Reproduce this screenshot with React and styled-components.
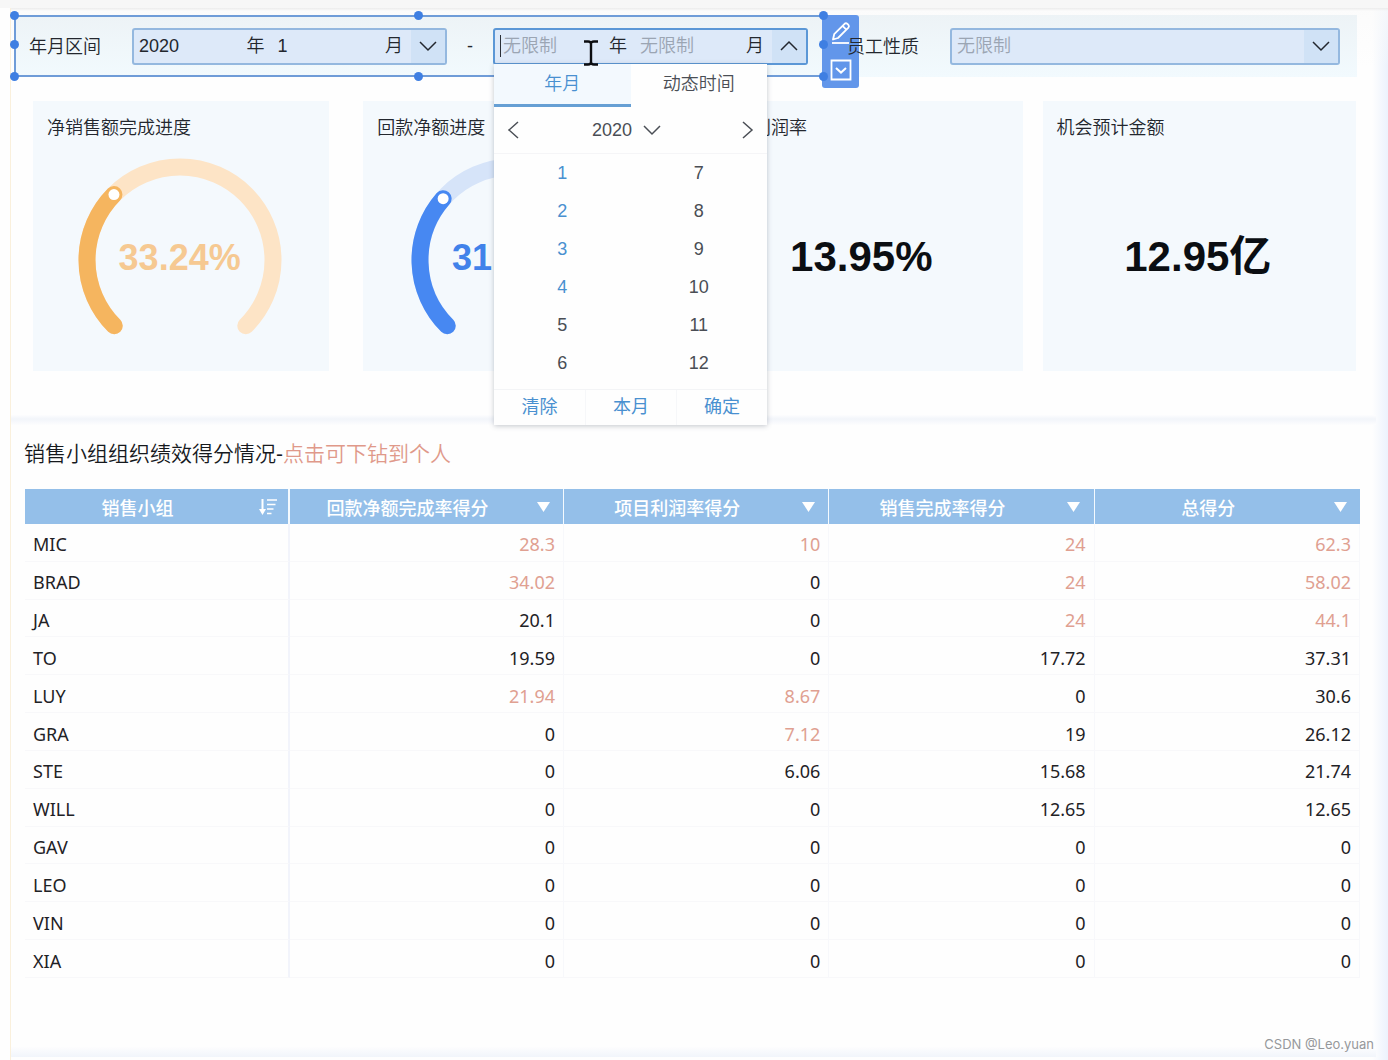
import React from "react";
import styled, { createGlobalStyle, css } from "styled-components";

const cjk = `"Noto Sans CJK SC", sans-serif`;
const uiFont = `"Liberation Sans", ${cjk}`;
const dataFont = `"Noto Sans", ${cjk}`;

const Global = createGlobalStyle`
  *, *::before, *::after { box-sizing: border-box; }
  body { margin: 0; background: #fefefe; color: #23272e; font: 350 18px/26px ${uiFont}; }
  button, input, select { font: inherit; color: inherit; margin: 0; padding: 0; border: 0; border-radius: 0; background: none; }
  button { cursor: pointer; }
  h1, h2, p { margin: 0; font-weight: inherit; font-size: inherit; }
`;

const Page = styled.div`
  position: relative;
  min-height: 100vh;
  display: flex;
  flex-direction: column;
  overflow: hidden;
`;

const TopStrip = styled.header`
  flex: none;
  height: 8px;
  background: #f7f7f7;
`;

const Board = styled.main`
  flex: 1;
  display: flex;
  flex-direction: column;
  margin-left: 10px;
  padding: 7px 12px 0 0;
  border-left: 1px solid #faf0dc;
  background:
    linear-gradient(to bottom, #ececec, rgba(250, 250, 250, 0.6) 3px, rgba(254, 254, 254, 0) 60px),
    linear-gradient(to left, #ecf2fc, rgba(254, 254, 254, 0) 16px);
`;

const FilterBar = styled.section`
  display: grid;
  grid-template-columns: 810fr 533fr;
  margin: 0 19px 0 3px;
  min-height: 62px;
  background: linear-gradient(to bottom, #edf3f6, #f2fafe);
`;

const SelectedWidget = styled.div`
  position: relative;
  display: flex;
  align-items: center;
  padding: 0 14px 0 13px;
  border: 2px solid #6f9cd8;
`;

const Widget = styled.div`
  display: flex;
  align-items: center;
  padding: 0 17px 0 23px;
`;

const FilterLabel = styled.label`
  position: relative;
  z-index: 2;
  flex: none;
  margin-right: 31px;
  padding-top: 2px;
`;

const Dash = styled.span`
  flex: none;
  width: 46px;
  text-align: center;
`;

const handleSpots = {
  nw: "left: -6px; top: -6px;",
  n: "left: calc(50% - 5px); top: -6px;",
  ne: "right: -6px; top: -6px;",
  w: "left: -6px; top: calc(50% - 6px);",
  e: "right: -6px; top: calc(50% - 6px);",
  sw: "left: -6px; bottom: -6px;",
  s: "left: calc(50% - 5px); bottom: -6px;",
  se: "right: -6px; bottom: -6px;",
};

const Handle = styled.i`
  position: absolute;
  z-index: 2;
  width: 9px;
  height: 9px;
  border-radius: 50%;
  background: #3f7fe2;
  ${(p) => handleSpots[p.$at]}
`;

const WidgetTools = styled.div`
  position: absolute;
  z-index: 1;
  top: -2px;
  left: 100%;
  width: 37px;
  height: 73px;
  display: grid;
  grid-template-rows: 1fr 1fr;
  border-radius: 0 3px 3px 3px;
  background: #6296ea;
`;

const ToolButton = styled.button`
  display: grid;
  place-items: center;
  color: #fff;
`;

const fieldBox = css`
  height: 37px;
  border: 2px solid ${(p) => (p.$open ? "#5b97d6" : "#94b8df")};
  border-radius: 3px;
  background: #dde9f9;
`;

const DateField = styled.div`
  ${fieldBox}
  position: relative;
  flex: 1;
  min-width: 0;
  display: flex;
  align-items: center;
`;

const DateInput = styled.input`
  flex: 1;
  min-width: 0;
  width: 0;
  height: 26px;
  padding-left: ${(p) => (p.$afterCaret ? 2 : 5)}px;
  outline: none;
  &::placeholder { color: #9ba5b3; opacity: 1; }
`;

const Caret = styled.i`
  flex: none;
  width: 1px;
  height: 22px;
  margin-left: 5px;
  background: #2b3038;
`;

const Unit = styled.span`
  flex: none;
  margin-right: 8px;
`;

const FieldToggle = styled.button`
  flex: none;
  width: 34px;
  height: 100%;
  display: grid;
  place-items: center;
  background: #d0e2f6;
`;

const SelectField = styled.div`
  ${fieldBox}
  flex: 1;
  min-width: 0;
  position: relative;
`;

const NativeSelect = styled.select`
  width: 100%;
  height: 100%;
  padding: 0 40px 0 5px;
  appearance: none;
  color: #9ba5b3;
  outline: none;
`;

const SelectArrow = styled.span`
  position: absolute;
  inset: 0 0 0 auto;
  width: 34px;
  display: grid;
  place-items: center;
  background: #d0e2f6;
  pointer-events: none;
`;

const TextCursor = styled.svg`
  position: absolute;
  z-index: 6;
  left: 87px;
  top: 9px;
`;

const Popup = styled.div`
  position: absolute;
  z-index: 5;
  top: 34px;
  left: -1px;
  width: 273px;
  background: #fefefe;
  color: #4a4e55;
  box-shadow: 0 1px 5px rgba(60, 70, 90, 0.3);
`;

const Tabs = styled.div`
  display: grid;
  grid-template-columns: 1fr 1fr;
`;

const Tab = styled.button`
  height: 43px;
  border-bottom: 3px solid ${(p) => (p.$active ? "#669fd4" : "transparent")};
  background: ${(p) => (p.$active ? "#f3f9fe" : "transparent")};
  color: ${(p) => (p.$active ? "#4990d0" : "#4a4e55")};
`;

const YearBar = styled.div`
  height: 47px;
  display: flex;
  align-items: center;
  justify-content: space-between;
  padding: 0 11px;
  border-bottom: 1px solid #f5f5f7;
`;

const IconButton = styled.button`
  display: flex;
  align-items: center;
  gap: 11px;
  color: #4a4e55;
`;

const YearButton = styled(IconButton)`
  padding-right: 8px;
`;

const Months = styled.div`
  display: grid;
  grid-auto-flow: column;
  grid-template-rows: repeat(6, 38px);
  grid-template-columns: 1fr 1fr;
  padding-bottom: 7px;
`;

const Month = styled.button`
  color: ${(p) => (p.$inRange ? "#4990d0" : "#4a4e55")};
`;

const PopupActions = styled.div`
  display: grid;
  grid-template-columns: repeat(3, 1fr);
  border-top: 1px solid #f3f4f6;
`;

const Action = styled.button`
  height: 35px;
  color: #4990d0;
  font-weight: 400;
  & + & { border-left: 1px solid #f6f7f9; }
`;

const Cards = styled.section`
  display: flex;
  margin: 24px 20px 0 22px;
`;

const Card = styled.article`
  flex: ${(p) => p.$grow} 1 0;
  min-width: 0;
  min-height: 270px;
  margin-left: ${(p) => p.$gap || 0}px;
  padding: 14px 17px 0 14px;
  background: #f4f9fd;
`;

const CardTitle = styled.h2`
  white-space: nowrap;
`;

const GaugeWrap = styled.div`
  display: grid;
  justify-items: center;
  align-items: center;
  margin-top: 17px;
  & > * { grid-area: 1 / 1; }
`;

const GaugeValue = styled.p`
  margin-bottom: 4px;
  color: ${(p) => p.$color};
  font: 700 36px/40px ${uiFont};
`;

const Figure = styled.p`
  margin-top: 91px;
  text-align: center;
  color: #0b0e12;
  font: 700 42px/50px ${uiFont};
`;

const Divider = styled.hr`
  width: 100%;
  height: 10px;
  margin: 44px 0 0;
  border: 0;
  background: linear-gradient(to bottom, #fdfdfe, #f2f5fa 40%, #fdfdfe);
`;

const TableTitle = styled.h1`
  margin: 13px 16px 19px 13px;
  color: #16191d;
  font-size: 21px;
  line-height: 32px;
`;

const Hint = styled.span`
  color: #e0998a;
`;

const TableWrap = styled.div`
  margin: 0 16px 68px 14px;
`;

const Table = styled.table`
  width: 100%;
  height: 489px;
  table-layout: fixed;
  border-collapse: separate;
  border-spacing: 0;
  font-family: ${dataFont};
  color: #1f2226;
`;

const HeadCell = styled.th`
  height: 35px;
  padding: 0;
  background: #94bfe9;
  color: #fff;
  font-weight: 500;
  border-right: ${(p) => (p.$line ? p.$line : 0)}px solid #f4faff;
`;

const HeadInner = styled.div`
  display: flex;
  align-items: center;
  padding-right: 10px;
`;

const HeadText = styled.span`
  flex: 1;
  padding: 2px 8px 0 0;
  line-height: 26px;
`;

const SortButton = styled.button`
  flex: none;
  width: 20px;
  height: 20px;
  display: grid;
  place-items: center;
  color: #fff;
`;

const cell = css`
  padding: 4px 8px 0;
  border-bottom: 1px solid #f8f8fa;
  font-weight: 400;
`;

const NameCell = styled.th`
  ${cell}
  text-align: left;
  border-right: 2px solid #f2f4fb;
`;

const ValueCell = styled.td`
  ${cell}
  text-align: right;
  border-right: 1px solid #f7f8fb;
  color: ${(p) => (p.$marked ? "#e0a091" : "inherit")};
`;

const BottomBand = styled.div`
  height: 10px;
  margin: auto 0 3px;
  background: linear-gradient(to bottom, #fdfdfe, #f1f5fb);
`;

const Watermark = styled.p`
  position: absolute;
  right: 14px;
  bottom: 6px;
  color: #96989b;
  font: 400 13px/20px Inter, sans-serif;
`;

function Chevron({ dir = "down", w = 16 }) {
  const d = {
    down: "M1 5 L9 13 L17 5",
    up: "M1 13 L9 5 L17 13",
    left: "M13 1 L4 9 L13 17",
    right: "M5 1 L14 9 L5 17",
  }[dir];
  return (
    <svg width={w} height={w} viewBox="0 0 18 18" fill="none" stroke="currentColor" strokeWidth="1.5" aria-hidden="true">
      <path d={d} />
    </svg>
  );
}

function Pencil() {
  return (
    <svg width="22" height="24" viewBox="0 0 22 24" fill="none" stroke="currentColor" strokeWidth="1.8" strokeLinejoin="round" aria-hidden="true">
      <path d="M3 18.5 L4.2 13.2 L14.6 2.8 Q16 1.6 17.4 2.9 L18.4 3.9 Q19.6 5.3 18.4 6.6 L8 17 Z M12.6 4.9 L16.3 8.6" />
      <path d="M2 22 H19" />
    </svg>
  );
}

function BoxedChevron() {
  return (
    <svg width="22" height="22" viewBox="0 0 22 22" fill="none" stroke="currentColor" strokeWidth="1.8" aria-hidden="true">
      <path d="M1.5 1.5 H20.5 V20.5 H1.5 Z" />
      <path d="M6 9 L11 13.6 L16 9" strokeWidth="2" />
    </svg>
  );
}

function SortIcon() {
  return (
    <svg width="20" height="20" viewBox="0 0 20 20" fill="none" stroke="currentColor" strokeWidth="1.7" aria-hidden="true">
      <path d="M4.5 2 V15" strokeWidth="2" />
      <path d="M1 12 H8 L4.5 18 Z" fill="currentColor" stroke="none" />
      <path d="M9 3 H19 M9 7.5 H17.5 M9 12 H15.5 M9 16.5 H13.5" />
    </svg>
  );
}

function Triangle() {
  return (
    <svg width="13" height="10" viewBox="0 0 13 10" fill="currentColor" aria-hidden="true">
      <path d="M0 0 H13 L6.5 10 Z" />
    </svg>
  );
}

function Gauge({ value, color, track, text }) {
  const r = 93;
  const c = 102;
  const point = (share) => {
    const a = ((135 + 270 * share) * Math.PI) / 180;
    return [c + r * Math.cos(a), c + r * Math.sin(a)];
  };
  const arc = (from, to) => {
    const [x1, y1] = point(from);
    const [x2, y2] = point(to);
    return `M${x1} ${y1} A${r} ${r} 0 ${(to - from) * 270 > 180 ? 1 : 0} 1 ${x2} ${y2}`;
  };
  const [dx, dy] = point(value / 100);
  return (
    <GaugeWrap>
      <svg width="204" height="204" viewBox="0 0 204 204" fill="none" strokeLinecap="round" strokeWidth="17" aria-hidden="true">
        <path d={arc(0, 1)} stroke={track} />
        <path d={arc(0, value / 100)} stroke={color} />
        <circle cx={dx} cy={dy} r="5.5" fill="#fff" />
      </svg>
      <GaugeValue $color={text}>{value}%</GaugeValue>
    </GaugeWrap>
  );
}

const months = [1, 2, 3, 4, 5, 6, 7, 8, 9, 10, 11, 12];

const columns = ["回款净额完成率得分", "项目利润率得分", "销售完成率得分", "总得分"];

// A trailing * marks a score that is highlighted.
const rows = [
  ["MIC", "28.3*", "10*", "24*", "62.3*"],
  ["BRAD", "34.02*", "0", "24*", "58.02*"],
  ["JA", "20.1", "0", "24*", "44.1*"],
  ["TO", "19.59", "0", "17.72", "37.31"],
  ["LUY", "21.94*", "8.67*", "0", "30.6"],
  ["GRA", "0", "7.12*", "19", "26.12"],
  ["STE", "0", "6.06", "15.68", "21.74"],
  ["WILL", "0", "0", "12.65", "12.65"],
  ["GAV", "0", "0", "0", "0"],
  ["LEO", "0", "0", "0", "0"],
  ["VIN", "0", "0", "0", "0"],
  ["XIA", "0", "0", "0", "0"],
];

function MonthPicker() {
  return (
    <Popup>
      <Tabs role="tablist">
        <Tab type="button" role="tab" aria-selected="true" $active>年月</Tab>
        <Tab type="button" role="tab" aria-selected="false">动态时间</Tab>
      </Tabs>
      <YearBar>
        <IconButton type="button" aria-label="上一年"><Chevron dir="left" w={18} /></IconButton>
        <YearButton type="button">2020<Chevron w={18} /></YearButton>
        <IconButton type="button" aria-label="下一年"><Chevron dir="right" w={18} /></IconButton>
      </YearBar>
      <Months>
        {months.map((m) => (
          <Month key={m} type="button" $inRange={m <= 4}>{m}</Month>
        ))}
      </Months>
      <PopupActions>
        <Action type="button">清除</Action>
        <Action type="button">本月</Action>
        <Action type="button">确定</Action>
      </PopupActions>
    </Popup>
  );
}

export default function App() {
  return (
    <Page>
      <Global />
      <TopStrip />
      <Board>
        <FilterBar>
          <SelectedWidget>
            <FilterLabel htmlFor="start-year">年月区间</FilterLabel>
            <DateField>
              <DateInput id="start-year" defaultValue="2020" />
              <Unit>年</Unit>
              <DateInput aria-label="开始月" defaultValue="1" />
              <Unit>月</Unit>
              <FieldToggle type="button" aria-label="展开"><Chevron w={18} /></FieldToggle>
            </DateField>
            <Dash>-</Dash>
            <DateField $open>
              <Caret />
              <DateInput $afterCaret aria-label="结束年" placeholder="无限制" />
              <Unit>年</Unit>
              <DateInput aria-label="结束月" placeholder="无限制" />
              <Unit>月</Unit>
              <FieldToggle type="button" aria-label="收起"><Chevron dir="up" w={18} /></FieldToggle>
              <MonthPicker />
              <TextCursor width="18" height="28" viewBox="0 0 18 28" fill="none" stroke="#0c0d10" strokeWidth="2.4" aria-hidden="true">
                <path d="M2 2.5 H6 Q9 2.5 9 5 Q9 2.5 12 2.5 H16 M9 4 V24 M2 25.5 H6 Q9 25.5 9 23 Q9 25.5 12 25.5 H16" />
              </TextCursor>
            </DateField>
            <WidgetTools>
              <ToolButton type="button" aria-label="编辑"><Pencil /></ToolButton>
              <ToolButton type="button" aria-label="更多"><BoxedChevron /></ToolButton>
            </WidgetTools>
            {Object.keys(handleSpots).map((at) => <Handle key={at} $at={at} />)}
          </SelectedWidget>
          <Widget>
            <FilterLabel htmlFor="staff-type">员工性质</FilterLabel>
            <SelectField>
              <NativeSelect id="staff-type">
                <option>无限制</option>
              </NativeSelect>
              <SelectArrow><Chevron w={18} /></SelectArrow>
            </SelectField>
          </Widget>
        </FilterBar>

        <Cards>
          <Card $grow={295}>
            <CardTitle>净销售额完成进度</CardTitle>
            <Gauge value={33.24} color="#f5b55f" track="#fde4c6" text="#f6c992" />
          </Card>
          <Card $grow={302} $gap={34}>
            <CardTitle>回款净额进度</CardTitle>
            <Gauge value={31.96} color="#4788f2" track="#d6e4f9" text="#4182ea" />
          </Card>
          <Card $grow={321} $gap={37}>
            <CardTitle>项目利润率</CardTitle>
            <Figure>13.95%</Figure>
          </Card>
          <Card $grow={314} $gap={20}>
            <CardTitle>机会预计金额</CardTitle>
            <Figure>12.95亿</Figure>
          </Card>
        </Cards>

        <Divider />

        <TableTitle>
          销售小组组织绩效得分情况-<Hint>点击可下钻到个人</Hint>
        </TableTitle>
        <TableWrap>
          <Table>
            <colgroup>
              <col style={{ width: `${(265 / 1335) * 100}%` }} />
              <col style={{ width: `${(274 / 1335) * 100}%` }} />
              <col />
              <col />
              <col />
            </colgroup>
            <thead>
              <tr>
                <HeadCell $line={2} scope="col">
                  <HeadInner>
                    <HeadText>销售小组</HeadText>
                    <SortButton type="button" aria-label="排序"><SortIcon /></SortButton>
                  </HeadInner>
                </HeadCell>
                {columns.map((name, i) => (
                  <HeadCell key={name} $line={i < 3 ? 1 : 0} scope="col">
                    <HeadInner>
                      <HeadText>{name}</HeadText>
                      <SortButton type="button" aria-label="筛选"><Triangle /></SortButton>
                    </HeadInner>
                  </HeadCell>
                ))}
              </tr>
            </thead>
            <tbody>
              {rows.map(([name, ...values]) => (
                <tr key={name}>
                  <NameCell scope="row">{name}</NameCell>
                  {values.map((v, i) => (
                    <ValueCell key={i} $marked={v.endsWith("*")}>{v.replace("*", "")}</ValueCell>
                  ))}
                </tr>
              ))}
            </tbody>
          </Table>
        </TableWrap>
        <BottomBand />
      </Board>
      <Watermark>CSDN @Leo.yuan</Watermark>
    </Page>
  );
}
